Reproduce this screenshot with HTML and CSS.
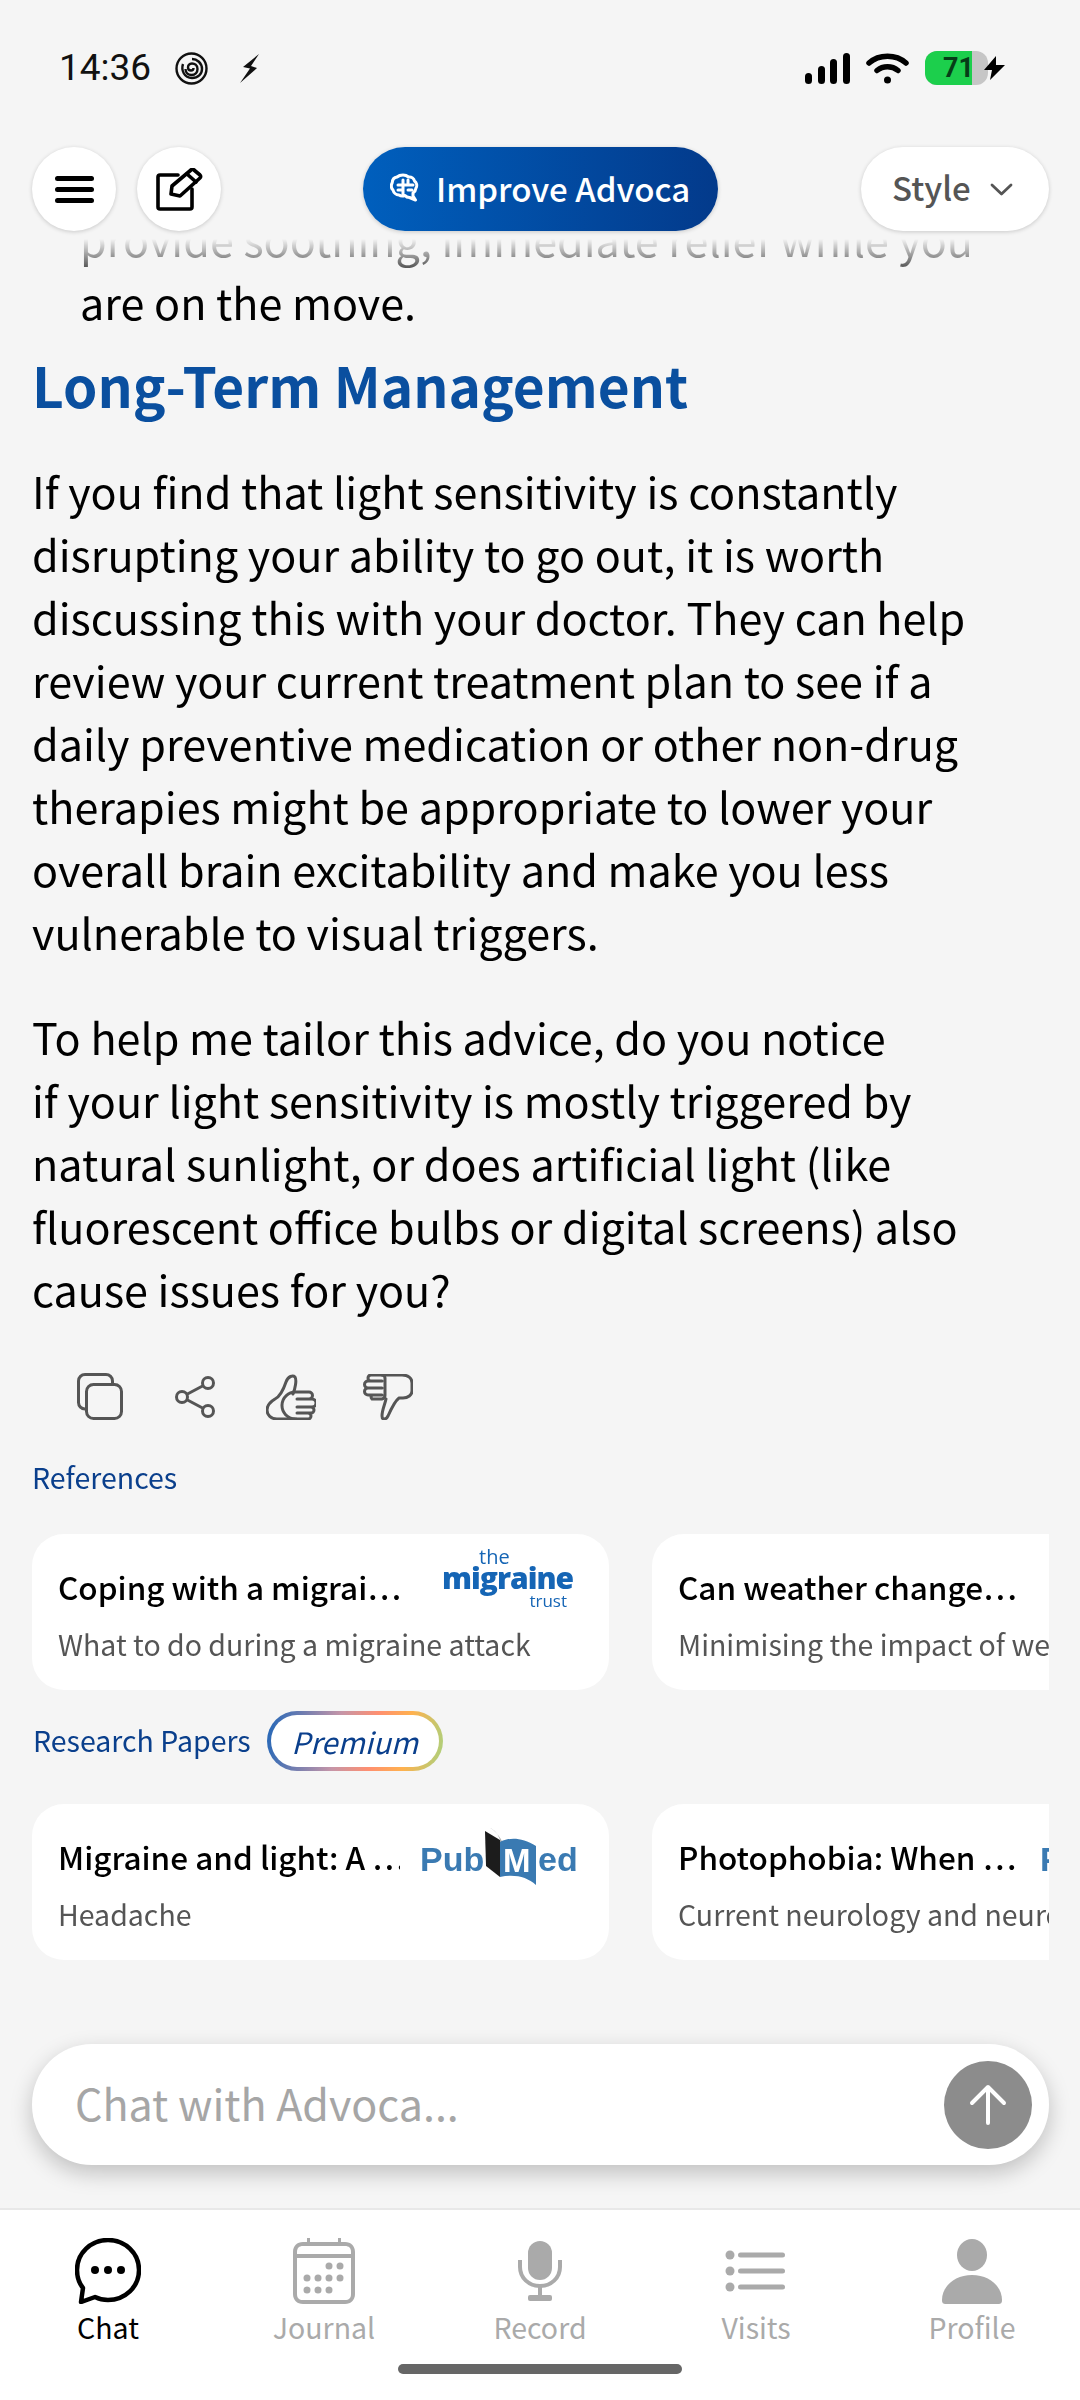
FILE: index.html
```html
<!DOCTYPE html>
<html lang="en">
<head>
    <meta charset="UTF-8">
    <meta name="viewport" content="width=device-width, initial-scale=1.0">
    <title>Advoca Chat</title>
    <link rel="stylesheet" href="styles.css">
</head>
<body>

<div class="status-bar">
    <div class="status-left">
        <span class="clock">14:36</span>
        <svg class="spiral-icon" viewBox="0 0 33 33" fill="none" stroke="#111" stroke-width="2.400">
            <circle cx="16.500" cy="16.500" r="15"/>
            <path d="M8 12c-2 6 1 14 9 14 6 0 10-4 10-9 0-6-5-10-10-10"/>
            <path d="M10.500 17c0 4 3 6 6 6 4 0 6-3 6-6 0-4-3-5.500-5.500-5.500-3 0-4 2-4 4 0 2 1.500 3 3 3 1.500 0 2.500-1 2.500-2.500"/>
        </svg>
        <svg class="bolt-icon" viewBox="0 0 19 29" fill="#111"><path d="M19 0 3 13l7 1.500L0 29 17 14l-6-2z"/></svg>
    </div>
    <div class="status-right">
        <svg class="signal-icon" viewBox="0 0 45 31" fill="#000">
            <rect x="0" y="20" width="7" height="11" rx="3.500"/>
            <rect x="13" y="13" width="7" height="18" rx="3.500"/>
            <rect x="25" y="6" width="7" height="25" rx="3.500"/>
            <rect x="38" y="0" width="7" height="31" rx="3.500"/>
        </svg>
        <svg class="wifi-icon" viewBox="0 0 43 32" fill="none" stroke="#000" stroke-width="5.500" stroke-linecap="round">
            <path d="M3 11C13 2 30 2 40 11"/>
            <path d="M11 18.500c6-5 15-5 21 0"/>
            <circle cx="21.500" cy="28" r="3.500" fill="#000" stroke="none"/>
        </svg>
        <div class="battery"><div class="battery-fill"></div><span class="battery-level">71</span></div>
        <svg class="charge-icon" viewBox="0 0 21 24" fill="#000"><path d="M12 0 0 14h8l-2 10 15-15h-9z"/></svg>
    </div>
</div>

<div class="top-bar">
    <div class="top-left">
        <button class="round-btn">
            <svg width="39" height="27" viewBox="0 0 39 27" fill="#000">
                <rect width="39" height="5" rx="2.500"/>
                <rect y="11" width="39" height="5" rx="2.500"/>
                <rect y="22" width="39" height="5" rx="2.500"/>
            </svg>
        </button>
        <button class="round-btn">
            <svg width="47" height="43" viewBox="0 0 47 43" fill="none" stroke="#000" stroke-width="3.600" stroke-linejoin="round" stroke-linecap="round">
                <path d="M22 7H4a2 2 0 0 0-2 2v30a2 2 0 0 0 2 2h30a2 2 0 0 0 2-2V21"/>
                <path d="M15 26l1-8L35 2a2 2 0 0 1 3 0l6 5a2 2 0 0 1 0 3L24 28z"/>
                <path d="M31 6l9 8"/>
            </svg>
        </button>
    </div>
    <button class="improve-btn">
        <svg width="30" height="30" viewBox="0 0 30 30" fill="none" stroke="#fff" stroke-width="3" stroke-linecap="round" stroke-linejoin="round">
            <path d="M13 2c2 0 4 .7 5.500 2 3-.5 5.500 1.500 6 4 2 1.500 3 4.500 1.500 7-.3 2.300-1.500 4-3 5v3l2.500 4-6-2.500c-2 0-3.500-.7-4.500-2-2 .8-4.500.6-6-.5-3-.2-5.500-2.500-6-5-2-2-2-5-.7-7.500C2.500 6 4.500 4.300 7 4c1.500-1.300 4-2 6-2z"/>
            <path d="M13 7v14M8 12h10M18 7v5h5M8 17h5M18 17h4"/>
        </svg>
        <span>Improve Advoca</span>
    </button>
    <div class="top-right">
        <button class="style-btn">
            <span>Style</span>
            <svg width="23" height="13" viewBox="0 0 23 13" fill="none" stroke="#555" stroke-width="2.800" stroke-linecap="round" stroke-linejoin="round"><path d="M2 2l9.500 9L21 2"/></svg>
        </button>
    </div>
</div>

<div class="chat-scroll">
    <div class="answer">
        <p class="list-tail">provide soothing, immediate relief while you are on the move.</p>
        <h2>Long-Term Management</h2>
        <p>If you find that light sensitivity is constantly disrupting your ability to go out, it is worth discussing this with your doctor. They can help review your current treatment plan to see if a daily preventive medication or other non-drug therapies might be appropriate to lower your overall brain excitability and make you less vulnerable to visual triggers.</p>
        <p>To help me tailor this advice, do you notice<br>if your light sensitivity is mostly triggered by natural sunlight, or does artificial light (like fluorescent office bulbs or digital screens) also cause issues for you?</p>
    </div>

    <div class="actions">
        <svg class="copy-icon" viewBox="0 0 46 47" fill="none" stroke="#555" stroke-width="3">
            <rect x="9.500" y="11.500" width="35" height="34" rx="7"/>
            <path d="M9.500 36H8a6.500 6.500 0 0 1-6.500-6.500V8A6.500 6.500 0 0 1 8 1.500h21A6.500 6.500 0 0 1 35.500 8v3.500"/>
        </svg>
        <svg class="share-icon" viewBox="0 0 40 42" fill="none" stroke="#555" stroke-width="3">
            <circle cx="33" cy="7" r="5.500"/>
            <circle cx="7" cy="21" r="5.500"/>
            <circle cx="33" cy="35" r="5.500"/>
            <path d="M28 9.700 12 18.300M12 23.700l16 8.600"/>
        </svg>
        <svg class="thumb-icon" viewBox="0 0 50 46" fill="none" stroke="#555" stroke-width="3" stroke-linejoin="round" stroke-linecap="round">
            <path d="M30 45H11C5 45 1 41 1 36c0-5 3-8 8-11 4-2 8-8 11-17 2-6 7-7 9-5 2 3 0 12-2 17"/>
            <path d="M30 18h13a3 3 0 0 1 0 7H31M31 25h15a3 3 0 0 1 0 8H31M31 33h14a3 3 0 0 1 0 6H31M31 39h11a3 3 0 0 1 0 6H30M30 18a3 3 0 0 0-1 27"/>
        </svg>
        <svg class="thumb-icon" viewBox="0 0 50 46" fill="none" stroke="#555" stroke-width="3" stroke-linejoin="round" stroke-linecap="round">
            <path d="M19 1h20c6 0 10 3 10 8v8c0 4-4 7-9 7h-4c-4 3-7 9-11 18-2 4-6 4-6 0 0-6 3-12 4-17"/>
            <path d="M19 1H8a3 3 0 0 0 0 6h11M19 7H5a3 3 0 0 0 0 7h14M19 14H5a3 3 0 0 0 0 7h14M19 21H9a3 3 0 0 0 0 4h10M19 1a3 3 0 0 1 3 3v17a4 4 0 0 1-3 4"/>
        </svg>
    </div>

    <div class="section-label refs-label">References</div>
    <div class="card-row">
        <div class="ref-card">
            <div class="card-top">
                <span class="card-title">Coping with a migrai…</span>
                <div class="migraine-logo">
                    <span class="logo-the">the</span>
                    <span class="logo-main">migraine</span>
                    <span class="logo-trust">trust</span>
                </div>
            </div>
            <div class="card-sub">What to do during a migraine attack</div>
        </div>
        <div class="ref-card">
            <div class="card-top">
                <span class="card-title">Can weather change…</span>
            </div>
            <div class="card-sub">Minimising the impact of weather on migraine</div>
        </div>
    </div>

    <div class="papers-head">
        <div class="section-label">Research Papers</div>
        <div class="premium-pill"><span>Premium</span></div>
    </div>
    <div class="card-row">
        <div class="ref-card">
            <div class="card-top">
                <span class="card-title">Migraine and light: A …</span>
                <div class="pubmed-logo">
                    <span class="pub-text">Pub</span>
                    <svg class="pub-book" width="54" height="57" viewBox="0 0 54 57">
                        <path d="M3 3 4 38l14 11V12z" fill="#1c1c1c"/>
                        <path d="M8 0c5 2 8 6 10 12v37l3-4V15C18 9 14 3 8 0z" fill="#b0b0b0"/>
                        <path d="M18 14c9-5 22-5 36 4v39c-9-8-21-11-36-8z" fill="#3a7ab2"/>
                    </svg>
                    <span class="pub-m">M</span>
                    <span class="pub-text">ed</span>
                </div>
            </div>
            <div class="card-sub">Headache</div>
        </div>
        <div class="ref-card">
            <div class="card-top">
                <span class="card-title">Photophobia: When …</span>
                <div class="pubmed-logo"><span class="pub-only">Pub</span></div>
            </div>
            <div class="card-sub">Current neurology and neuroscience reports</div>
        </div>
    </div>
</div>

<div class="chat-input">
    <span class="chat-placeholder">Chat with Advoca...</span>
    <button class="send-btn">
        <svg width="44" height="44" viewBox="0 0 44 44" fill="none" stroke="#fff" stroke-width="4" stroke-linecap="round" stroke-linejoin="round"><path d="M22 40V4M6 20 22 4l16 16"/></svg>
    </button>
</div>

<div class="bottom-nav">
    <div class="nav-item active">
        <svg class="nav-icon" viewBox="0 0 66 66" fill="none" stroke="#000" stroke-width="4.500" stroke-linejoin="round">
            <path d="M33 2c17 0 31 13 31 30S50 62 33 62c-5 0-9-1-13-3l-14 5 2-14C4 45 2 39 2 32 2 15 16 2 33 2z"/>
            <circle cx="20" cy="32" r="4" fill="#000" stroke="none"/>
            <circle cx="33" cy="32" r="4" fill="#000" stroke="none"/>
            <circle cx="46" cy="32" r="4" fill="#000" stroke="none"/>
        </svg>
        <span>Chat</span>
    </div>
    <div class="nav-item">
        <svg class="nav-icon" viewBox="0 0 66 66" fill="#aaa">
            <path d="M12 4h4V0h3v4h28V0h3v4h4c6 0 10 4 10 10v42c0 6-4 10-10 10H12C6 66 2 62 2 56V14C2 8 6 4 12 4zm-6 16v36c0 4 2 6 6 6h42c4 0 6-2 6-6V20zm0-4h54v-2c0-4-2-6-6-6H12c-4 0-6 2-6 6z" fill-rule="evenodd"/>
            <circle cx="38" cy="28" r="3.500"/><circle cx="49" cy="28" r="3.500"/>
            <circle cx="16" cy="40" r="3.500"/><circle cx="27" cy="40" r="3.500"/><circle cx="38" cy="40" r="3.500"/><circle cx="49" cy="40" r="3.500"/>
            <circle cx="16" cy="52" r="3.500"/><circle cx="27" cy="52" r="3.500"/><circle cx="38" cy="52" r="3.500"/>
        </svg>
        <span>Journal</span>
    </div>
    <div class="nav-item">
        <svg class="nav-icon" viewBox="0 0 66 66" fill="#aaa">
            <rect x="21" y="3" width="24" height="39" rx="12"/>
            <path d="M13 22v7c0 11 9 19 20 19s20-8 20-19v-7" fill="none" stroke="#aaa" stroke-width="4"/>
            <rect x="31" y="48" width="4" height="10"/>
            <rect x="21" y="57" width="24" height="6" rx="2"/>
        </svg>
        <span>Record</span>
    </div>
    <div class="nav-item">
        <svg class="nav-icon" viewBox="0 0 66 66" fill="#aaa">
            <circle cx="7" cy="17" r="4.500"/><rect x="15" y="14.500" width="47" height="5" rx="2.500"/>
            <circle cx="7" cy="33" r="4.500"/><rect x="15" y="30.500" width="47" height="5" rx="2.500"/>
            <circle cx="7" cy="49" r="4.500"/><rect x="15" y="46.500" width="47" height="5" rx="2.500"/>
        </svg>
        <span>Visits</span>
    </div>
    <div class="nav-item">
        <svg class="nav-icon" viewBox="0 0 66 66" fill="#aaa">
            <ellipse cx="33" cy="17" rx="15" ry="16"/>
            <path d="M3 62c0-14 13-25 30-25s30 11 30 25c0 3-1 4-4 4H7c-3 0-4-1-4-4z"/>
        </svg>
        <span>Profile</span>
    </div>
    <div class="home-bar"></div>
</div>

</body>
</html>
```

FILE: styles.css
```css
* {
    box-sizing: border-box;
}
body {
    margin: 0;
    width: 1080px;
    height: 2400px;
    overflow: hidden;
    display: flex;
    flex-direction: column;
    background-color: #f5f5f5;
    font-family: "Noto Sans CJK JP", "Noto Sans", sans-serif;
    color: #000;
}
button {
    border: none;
    padding: 0;
    font-family: inherit;
}

/* status bar */
.status-bar {
    height: 147px;
    flex: none;
    display: flex;
    justify-content: space-between;
    align-items: flex-start;
    padding: 50px 75px 0 59px;
}
.status-left, .status-right {
    display: flex;
    align-items: center;
    height: 36px;
}
.clock {
    font-family: Roboto, sans-serif;
    font-size: 37px;
    line-height: 36px;
    color: #111;
    width: 116px;
}
.spiral-icon {
    width: 33px;
    height: 33px;
    margin-right: 32px;
}
.bolt-icon {
    width: 19px;
    height: 29px;
}
.signal-icon {
    width: 45px;
    height: 31px;
    margin-right: 16px;
}
.wifi-icon {
    width: 43px;
    height: 32px;
    margin-right: 16px;
}
.battery {
    width: 63px;
    height: 34px;
    border-radius: 12px;
    background-color: #c6c6c6;
    position: relative;
    overflow: hidden;
}
.battery-fill {
    width: 47px;
    height: 100%;
    background-color: #1ccf4c;
}
.battery-level {
    position: absolute;
    left: 18px;
    top: 0;
    width: 30px;
    text-align: center;
    font-family: Roboto, sans-serif;
    font-size: 27px;
    font-weight: 700;
    line-height: 34px;
    color: #063d17;
}
.charge-icon {
    width: 21px;
    height: 24px;
    margin-left: -4px;
    position: relative;
}

/* top buttons */
.top-bar {
    height: 84px;
    flex: none;
    display: grid;
    grid-template-columns: 1fr auto 1fr;
    align-items: center;
    padding: 0 31px 0 32px;
    position: relative;
    z-index: 2;
}
.top-left {
    display: flex;
    gap: 21px;
}
.top-right {
    display: flex;
    justify-content: flex-end;
}
.round-btn {
    width: 84px;
    height: 84px;
    border-radius: 50%;
    background: #fff;
    display: flex;
    align-items: center;
    justify-content: center;
    box-shadow: 0 1px 4px rgba(0, 0, 0, 0.18);
}
.improve-btn {
    width: 355px;
    height: 84px;
    border-radius: 42px;
    background: linear-gradient(90deg, #005fbd, #033a8b);
    color: #fff;
    font-size: 33px;
    font-weight: 500;
    display: flex;
    align-items: center;
    gap: 16px;
    padding: 0 0 3px 27px;
    box-shadow: 0 1px 4px rgba(0, 0, 0, 0.18);
}
.style-btn {
    width: 188px;
    height: 84px;
    border-radius: 42px;
    background: #fff;
    color: #555;
    font-size: 33px;
    font-weight: 500;
    display: flex;
    align-items: center;
    gap: 19px;
    padding: 0 0 5px 31px;
    box-shadow: 0 1px 4px rgba(0, 0, 0, 0.18);
}
.style-btn svg {
    margin-top: 5px;
}

/* scrolled message */
.chat-scroll {
    flex: 1;
    min-height: 0;
    overflow: hidden;
    -webkit-mask-image: linear-gradient(180deg, transparent 8px, #000 52px);
    mask-image: linear-gradient(180deg, transparent 8px, #000 52px);
}
.answer {
    margin-top: -24px;
    padding: 0 88px 0 32px;
    font-size: 43.100px;
    line-height: 63px;
}
.answer p {
    margin: 0 0 42px;
}
.answer .list-tail {
    margin: 0;
    padding: 0 0 0 48px;
}
.answer h2 {
    margin: 20px 0 43px;
    font-size: 55px;
    line-height: 63px;
    font-weight: 700;
    color: #0a4f9f;
    white-space: nowrap;
}
.actions {
    display: flex;
    align-items: center;
    gap: 49px;
    padding-left: 77px;
    margin-top: 53px;
}
.copy-icon {
    width: 46px;
    height: 47px;
    margin-right: 3px;
}
.share-icon {
    width: 40px;
    height: 42px;
    margin-right: 2px;
}
.thumb-icon {
    width: 50px;
    height: 46px;
}
.share-icon + .thumb-icon {
    margin-right: -2px;
}
.section-label {
    font-size: 28.500px;
    line-height: 44px;
    color: #0a3f8c;
}
.refs-label {
    margin: 35px 0 35px 32px;
}
.card-row {
    display: flex;
    gap: 43px;
    margin: 0 31px 0 32px;
    overflow: hidden;
}
.ref-card {
    flex: none;
    width: 577px;
    height: 156px;
    background: #fff;
    border-radius: 32px;
    padding: 28px 26px 0;
}
.card-top {
    display: flex;
    height: 48px;
    align-items: center;
    position: relative;
}
.card-title {
    width: 342px;
    overflow: hidden;
    font-size: 31.500px;
    font-weight: 500;
    line-height: 48px;
    white-space: nowrap;
}
.ref-card:last-child .card-title {
    width: 350px;
}
.card-sub {
    margin-top: 12px;
    font-size: 28.500px;
    line-height: 44px;
    color: #555;
    white-space: nowrap;
}
.papers-head {
    display: flex;
    align-items: center;
    gap: 16px;
    margin: 21px 0 33px 33px;
}
.papers-head .section-label {
    margin-bottom: 3px;
}
.premium-pill {
    width: 176px;
    height: 60px;
    padding: 4px;
    border-radius: 30px;
    background: linear-gradient(100deg, #1f66b8 0%, #c595a8 40%, #ff8f70 60%, #ffb14e 78%, #a8d27e 100%);
}
.premium-pill span {
    display: block;
    height: 52px;
    border-radius: 26px;
    background: #fff;
    text-align: center;
    font-size: 29.500px;
    font-style: italic;
    line-height: 52px;
    color: #0a3f8c;
}

/* source logos */
.migraine-logo {
    position: absolute;
    left: 384px;
    top: -14px;
    width: 133px;
    height: 60px;
    color: #1565b5;
    font-family: "Open Sans", sans-serif;
    line-height: 1;
}
.migraine-logo span {
    position: absolute;
    white-space: nowrap;
}
.logo-the {
    left: 37px;
    top: -1px;
    font-size: 20px;
}
.logo-main {
    left: 0;
    top: 15px;
    font-size: 30px;
    font-weight: 800;
    letter-spacing: -1px;
}
.logo-trust {
    right: 8px;
    top: 44px;
    font-size: 17px;
}
.pubmed-logo {
    position: absolute;
    left: 362px;
    top: -2px;
    width: 160px;
    height: 57px;
    color: #3a7ab2;
    font-family: "Liberation Sans", sans-serif;
}
.pub-text, .pub-only {
    position: absolute;
    left: 0;
    top: 5px;
    font-size: 34px;
    font-weight: 700;
    line-height: 48px;
}
.pub-text:last-child {
    left: 118px;
}
.pub-book {
    position: absolute;
    left: 62px;
    top: -2px;
}
.pub-m {
    position: absolute;
    left: 83px;
    top: 11px;
    font-size: 33px;
    font-weight: 700;
    line-height: 40px;
    color: #fff;
}

/* input */
.chat-input {
    flex: none;
    height: 121px;
    margin: 0 31px 43px 32px;
    border-radius: 60px;
    background: #fff;
    display: flex;
    align-items: center;
    justify-content: space-between;
    padding: 0 17px 0 43px;
    box-shadow: 0 8px 22px rgba(0, 0, 0, 0.22);
    position: relative;
    z-index: 1;
}
.chat-placeholder {
    font-size: 43px;
    color: #a6a6a6;
    margin-bottom: 5px;
}
.send-btn {
    width: 88px;
    height: 88px;
    border-radius: 50%;
    background: #8c8c8c;
    display: flex;
    align-items: center;
    justify-content: center;
}

/* bottom navigation */
.bottom-nav {
    flex: none;
    height: 192px;
    background: #fff;
    border-top: 2px solid #e8e8e8;
    display: grid;
    grid-template-columns: repeat(5, 1fr);
    padding-top: 28px;
    align-items: start;
    position: relative;
    z-index: 2;
}
.nav-item {
    display: flex;
    flex-direction: column;
    align-items: center;
    color: #aaa;
    font-size: 28.500px;
    line-height: 40px;
}
.nav-item.active {
    color: #000;
}
.nav-icon {
    width: 66px;
    height: 66px;
    margin-bottom: 3px;
}
.home-bar {
    position: absolute;
    left: 398px;
    top: 154px;
    width: 284px;
    height: 10px;
    border-radius: 5px;
    background: #666;
}
```
